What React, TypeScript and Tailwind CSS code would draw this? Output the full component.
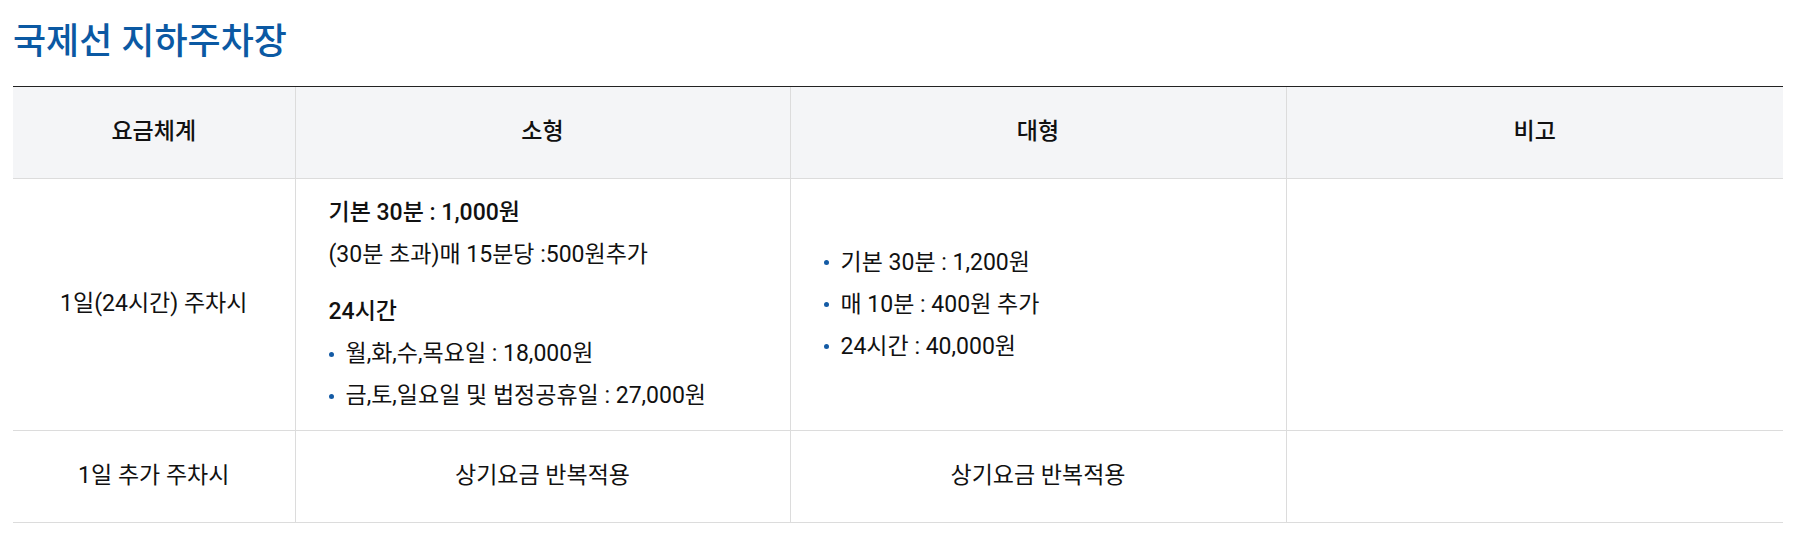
import React from "react";

const Bullet = ({ children }: { children: React.ReactNode }) => (
  <li className="flex items-center leading-[42px]">
    <span className="mr-[12px] inline-block h-[5px] w-[5px] shrink-0 rounded-full bg-[#145ba5]" />
    <span>{children}</span>
  </li>
);

export default function App() {
  return (
    <div className="w-[1800px] h-[538px] bg-white font-['Roboto','Noto_Sans_CJK_KR',sans-serif] text-[#111]">
      <div className="pl-[13px] pr-[17px]">
        <h2 className="pt-[19px] h-[86px] text-[36px] leading-[46px] font-medium text-[#0b59a3]">
          국제선 지하주차장
        </h2>
        <table className="w-full table-fixed border-collapse text-[23px]">
          <colgroup>
            <col className="w-[282px]" />
            <col className="w-[495px]" />
            <col className="w-[496px]" />
            <col />
          </colgroup>
          <thead>
            <tr className="h-[92px] bg-[#f4f5f7]">
              <th className="border-t border-t-[#222] border-b border-b-[#dcdcdc] font-medium text-center">요금체계</th>
              <th className="border-t border-t-[#222] border-b border-b-[#dcdcdc] border-l border-l-[#dcdcdc] font-medium text-center">소형</th>
              <th className="border-t border-t-[#222] border-b border-b-[#dcdcdc] border-l border-l-[#dcdcdc] font-medium text-center">대형</th>
              <th className="border-t border-t-[#222] border-b border-b-[#dcdcdc] border-l border-l-[#dcdcdc] font-medium text-center">비고</th>
            </tr>
          </thead>
          <tbody>
            <tr className="h-[252px]">
              <td className="border-b border-[#dcdcdc] text-center align-middle">1일(24시간) 주차시</td>
              <td className="border-b border-l border-[#dcdcdc] px-[33px] py-[13px] align-middle">
                <p className="font-medium leading-[42px]">기본 30분 : 1,000원</p>
                <p className="leading-[42px]">(30분 초과)매 15분당 :500원추가</p>
                <p className="mt-[15px] font-medium leading-[42px]">24시간</p>
                <ul>
                  <Bullet>월,화,수,목요일 : 18,000원</Bullet>
                  <Bullet>금,토,일요일 및 법정공휴일 : 27,000원</Bullet>
                </ul>
              </td>
              <td className="border-b border-l border-[#dcdcdc] px-[33px] align-middle">
                <ul>
                  <Bullet>기본 30분 : 1,200원</Bullet>
                  <Bullet>매 10분 : 400원 추가</Bullet>
                  <Bullet>24시간 : 40,000원</Bullet>
                </ul>
              </td>
              <td className="border-b border-l border-[#dcdcdc]"></td>
            </tr>
            <tr className="h-[92px]">
              <td className="border-b border-[#dcdcdc] text-center align-middle">1일 추가 주차시</td>
              <td className="border-b border-l border-[#dcdcdc] text-center align-middle">상기요금 반복적용</td>
              <td className="border-b border-l border-[#dcdcdc] text-center align-middle">상기요금 반복적용</td>
              <td className="border-b border-l border-[#dcdcdc]"></td>
            </tr>
          </tbody>
        </table>
      </div>
    </div>
  );
}
